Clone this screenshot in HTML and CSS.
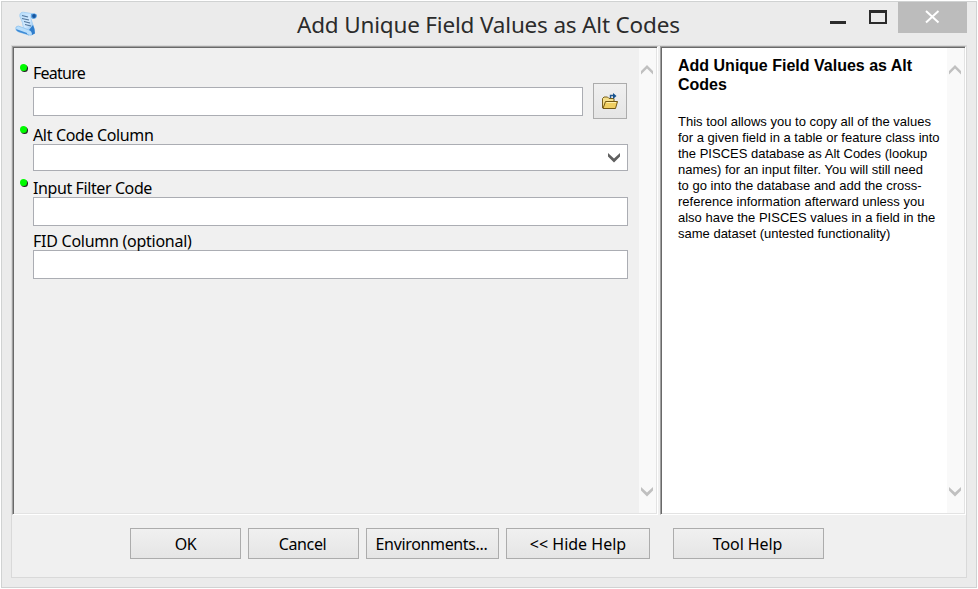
FILE: index.html
```html
<!DOCTYPE html>
<html lang="en">
<head>
<meta charset="utf-8">
<title>Add Unique Field Values as Alt Codes</title>
<link rel="stylesheet" href="styles.css">
</head>
<body>
<div class="window">
  <header class="titlebar">
    <svg class="app-icon" width="24" height="26" viewBox="0 0 24 26">
      <defs>
        <linearGradient id="paper" x1="0" y1="0" x2="1" y2="1"><stop offset="0" stop-color="#b5dcfa"/><stop offset=".5" stop-color="#d3eaff"/><stop offset="1" stop-color="#5ca4e4"/></linearGradient>
      </defs>
      <path d="M5 3C6 1 8 1 10 1.500L20 3Q15 4 16 8L18 14Q21 21 17 24L12 23 8 15Q8 12 6 8Q4 5 5 3Z" fill="url(#paper)" stroke="#9fcdf3" stroke-width=".8"/>
      <path d="M16 3Q21 1.500 22 4Q22 8 18 8Q15 7 16 3Z" fill="#5ba3e4"/>
      <circle cx="19" cy="5" r="1.900" fill="#17549c"/>
      <path d="M1 16Q3 14 6 16L14 19Q18 20 18 22Q17 25 14 24L4 21Q0 20 1 16Z" fill="#b9defb" stroke="#8dc1ee" stroke-width=".8"/>
      <path d="M1 18L12 22Q12 25 14 24L4 21Q1 20 1 18Z" fill="#3e8bd5"/>
      <path d="M14 19Q17 20 17 24L20 22.500Q20 18 18 14Z" fill="#2f7dcc"/>
      <path d="M7 4.500L13 6M7 7.500L14 9M9 10.500L15 12M10 13.500L16 15" stroke="#52769c" stroke-width="1.200"/>
    </svg>
    <h1 class="title">Add Unique Field Values as Alt Codes</h1>
    <div class="controls">
      <span class="minimize"></span>
      <span class="maximize"></span>
      <span class="close"><svg width="16" height="14" viewBox="0 0 16 14"><path d="M1 1L13.500 12.500M13.500 1L1 12.500" stroke="#fff" stroke-width="2"/></svg></span>
    </div>
  </header>
  <main class="client">
    <div class="panels">
      <section class="panel form-panel">
        <form class="form">
          <div class="field feature">
            <label class="required" for="feature"><span class="w-feature">Feature</span></label>
            <div class="row">
              <input id="feature" type="text">
              <button class="browse" type="button" aria-label="Browse">
                <svg width="18" height="18" viewBox="0 0 18 18"><path d="M1.500 15V5.500L3 4H6.500L8 5.500H13V8" fill="#f5df8b" stroke="#79601c"/><path d="M2 15.500L4.500 8.500H16.500L14.500 15.500Z" fill="#f0cf62" stroke="#725714"/><path d="M5.500 9.500H15" stroke="#fff0ac"/><path d="M9.500 5V2.500H13" fill="none" stroke="#24588e" stroke-width="1.400"/><path d="M12 0L15.500 3L12 6Z" fill="#14528f"/></svg>
              </button>
            </div>
          </div>
          <div class="field alt">
            <label class="required" for="alt"><span class="w-alt">Alt Code Column</span></label>
            <div class="combo" id="alt"><svg width="12" height="10" viewBox="0 0 12 10"><path d="M0 0L6 5.500L12 0V3.500L6 9.500L0 3.500Z" fill="#606060"/></svg></div>
          </div>
          <div class="field filter">
            <label class="required" for="filter"><span class="w-filter">Input Filter Code</span></label>
            <input id="filter" type="text">
          </div>
          <div class="field fid">
            <label for="fid"><span class="w-fid">FID Column (optional)</span></label>
            <input id="fid" type="text">
          </div>
        </form>
        <div class="scrollbar">
          <svg width="12" height="10" viewBox="0 0 12 10"><path d="M0 9.500L6 3.500L12 9.500V6L6 0L0 6Z" fill="#c0c0c0"/></svg>
          <svg width="12" height="10" viewBox="0 0 12 10"><path d="M0 0L6 5.500L12 0V3.500L6 9.500L0 3.500Z" fill="#c0c0c0"/></svg>
        </div>
      </section>
      <section class="panel help-panel">
        <article class="help">
          <h2>Add Unique Field Values as Alt<br>Codes</h2>
          <p>This tool allows you to copy all of the values<br>for a given field in a table or feature class into<br>the PISCES database as Alt Codes (lookup<br>names) for an input filter. You will still need<br>to go into the database and add the cross-<br>reference information afterward unless you<br>also have the PISCES values in a field in the<br>same dataset (untested functionality)</p>
        </article>
        <div class="scrollbar">
          <svg width="12" height="10" viewBox="0 0 12 10"><path d="M0 9.500L6 3.500L12 9.500V6L6 0L0 6Z" fill="#c0c0c0"/></svg>
          <svg width="12" height="10" viewBox="0 0 12 10"><path d="M0 0L6 5.500L12 0V3.500L6 9.500L0 3.500Z" fill="#c0c0c0"/></svg>
        </div>
      </section>
    </div>
    <footer class="actions">
      <button type="button" class="btn ok">OK</button>
      <button type="button" class="btn cancel">Cancel</button>
      <button type="button" class="btn env">Environments...</button>
      <button type="button" class="btn hide">&lt;&lt; Hide Help</button>
      <button type="button" class="btn tool">Tool Help</button>
    </footer>
  </main>
</div>
</body>
</html>
```
FILE: styles.css
```css
* { box-sizing: border-box; }
body { margin: 0; background: #fff; font-family: "Noto Sans", sans-serif; color: #000; }
.window { width: 976px; height: 587px; margin: 1px; border: 1px solid #d0d2d2; background: #ebebeb; overflow: hidden; }
.titlebar { display: flex; height: 43px; padding: 0 9px 0 13px; }
.app-icon { flex: none; margin-top: 9px; }
.title { flex: 1; margin: 6px 0 0 258px; font-size: 22.5px; font-weight: 400; line-height: 34px; white-space: nowrap; color: #2b2b2b; letter-spacing: -0.18px; }
.controls { display: flex; flex: none; }
.minimize { width: 16px; height: 3px; margin: 19px 23px 0 0; background: #2b2b2b; }
.maximize { width: 18px; height: 14px; margin: 8px 11px 0 0; border: 2px solid #2b2b2b; border-top-width: 3px; }
.close { display: flex; justify-content: center; width: 69px; height: 31px; padding-top: 8px; background: #bcbcbc; }
.client { width: 956px; height: 533px; margin-left: 9px; border: 1px solid #d9d9d9; background: #f0f0f0; }
.panels { display: flex; gap: 2px; height: 469px; }
.panel { display: flex; border: 1px solid; border-color: #a0a0a0 #fff #fff #a0a0a0; box-shadow: inset 1px 1px #696969, inset -1px -1px #e3e3e3; padding: 1px; }
.form-panel { width: 646px; }
.help-panel { width: 306px; background: #fff; }
.scrollbar { display: flex; flex-direction: column; justify-content: space-between; align-items: flex-start; width: 17px; padding: 17px 0 16px 2px; background: #f9f9f9; }
.form { width: 625px; padding: 15px 11px 0 19px; }
.field { display: flex; flex-direction: column; }
.field label { position: relative; height: 19px; font-size: 16px; line-height: 20px; white-space: nowrap; }
.required::before { content: ""; position: absolute; left: -13px; top: 1px; width: 7px; height: 7px; border-radius: 50%; background: #00fb00; box-shadow: 1px 1px #222; }
.w-feature { letter-spacing: -0.75px; }
.w-alt { letter-spacing: -0.35px; }
.w-filter { letter-spacing: -0.4px; }
.w-fid { letter-spacing: -0.26px; }
.field input { width: 595px; height: 29px; padding: 0 4px; border: 1px solid #abadb3; border-radius: 0; background: #fff; }
.row { display: flex; gap: 10px; align-items: flex-start; }
.field .row input { width: 550px; }
.browse { display: flex; align-items: center; justify-content: center; width: 34px; height: 36px; margin-top: -4px; padding: 2px 0 0; border: 1px solid #acacac; background: linear-gradient(#f0f0f0, #e5e5e5); }
.feature { height: 62px; }
.feature .required { height: 24px; }
.alt, .filter { height: 53px; }
.combo { display: flex; align-items: center; justify-content: flex-end; width: 595px; height: 27px; padding-right: 7px; border: 1px solid #abadb3; background: #fff; }
.help { width: 285px; padding: 8px 0 0 16px; font-family: "Liberation Sans", Arial, sans-serif; }
.help h2 { margin: 0; font-size: 16px; line-height: 19px; white-space: nowrap; }
.help p { margin: 20px 0 0; font-size: 13px; line-height: 16px; white-space: nowrap; }
.actions { display: flex; padding: 13px 0 0 118px; }
.btn { height: 31px; margin-right: 7px; padding: 1px 2px 0 0; border: 1px solid #acacac; background: linear-gradient(#f0f0f0, #e5e5e5); font: 16px/22px "Noto Sans", sans-serif; letter-spacing: -.35px; color: #000; white-space: nowrap; }
.ok, .cancel { width: 111px; }
.ok { padding-right: 0; }
.env { width: 133px; }
.hide { width: 144px; padding-right: 0; letter-spacing: 0; }
.tool { width: 151px; margin: 0 0 0 16px; letter-spacing: -.1px; }
```
